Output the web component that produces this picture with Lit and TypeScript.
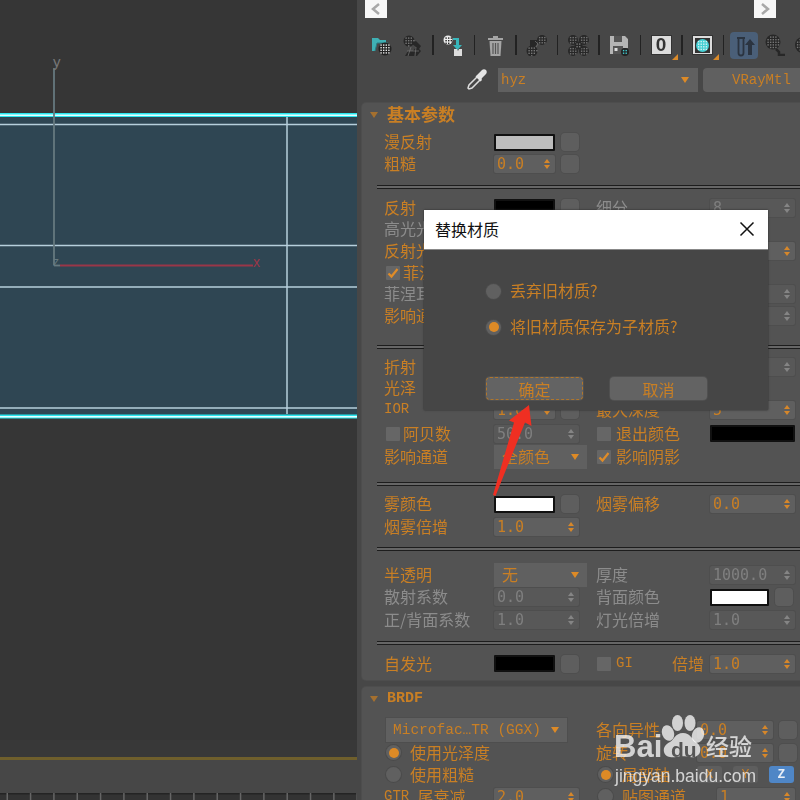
import { LitElement, html, css, svg } from "lit";
import { customElement } from "lit/decorators.js";

// checker ball used by most of the material editor toolbar icons
const ball = (cx: number, cy: number, r: number, bg: string, dot: string) => {
  const dots = [];
  for (let y = -r; y <= r; y += 2.6) {
    for (let x = -r; x <= r; x += 2.6) {
      if (x * x + y * y < r * r * 0.8) {
        dots.push(svg`<rect x=${cx + x - 0.7} y=${cy + y - 0.7} width="1.4" height="1.4" fill=${dot}></rect>`);
      }
    }
  }
  return svg`<circle cx=${cx} cy=${cy} r=${r} fill=${bg}></circle>${dots}`;
};

const D = "#272727";
const G = "#777";

const icons = {
  open: svg`<path d="M1 3h6l2 2h6v3H6l-2 8H1z" fill="#3fb0b4"></path><path d="M4 16l2-8h11" fill="none" stroke="#2a7d82" stroke-width="1"></path>${ball(14, 14, 6.5, "#222", "#e8e8e8")}`,
  scene: svg`${ball(7, 6, 5.5, D, G)}<path d="M9 8l5-2 5 5-2 3 2 2-4 5H3l3-5h5l3-4z" fill=${D}></path><path d="M5 16h12M9 12l-3 9M14 12l-1 9" stroke=${G} stroke-width="0.7" fill="none"></path>`,
  assign: svg`${ball(5, 5, 4.5, "#eee", "#222")}<path d="M10 3h6v7h3l-4.500 5-4.500-5h3V5h-3z" fill="#38b6bb"></path><path d="M11 14h3l1 2 1-2h3v7h-8z" fill="#ddd"></path>`,
  trash: svg`<path d="M8 1h5v2h5v2H3V3h5z" fill="#a5a5a5"></path><path d="M4.500 6h12l-1 15h-10z" fill="#a5a5a5"></path><path d="M8 8v11M10.500 8v11M13 8v11" stroke="#555" stroke-width="1.200"></path>`,
  link3: svg`${ball(16, 5, 5, D, G)}${ball(6, 16, 5.5, D, G)}<path d="M4 5h7v4l-2 3H4z" fill=${D}></path><path d="M9 6l3 3-2 3" stroke=${G} stroke-width="0.7" fill="none"></path>`,
  link6: svg`${ball(5, 5, 5, D, G)}${ball(16, 5, 5, D, G)}${ball(5, 16, 5, D, G)}${ball(16, 16, 5, D, G)}${ball(10.500, 10.500, 4, D, G)}`,
  save: svg`<path d="M1 1h15l3 3v9h-8v6H1z" fill="#b5b5b5"></path><rect x="5" y="1" width="8" height="6" fill="#555"></rect><rect x="4" y="11" width="10" height="8" fill="#555"></rect><rect x="5.500" y="13" width="3" height="3" fill="#ddd"></rect>${ball(16, 17, 4, "#222", "#42d0d5")}`,
  tube: svg`<rect width="28" height="27" rx="4" fill="#4a5f78"></rect><path d="M7 6h8M8.500 6v15a2.500 2.500 0 0 0 5 0V6" fill="none" stroke="#2b3440" stroke-width="1.800"></path><path d="M20 7l-5 6h3v10h4V13h3z" fill="#2b3440"></path>`,
  ballStem: svg`${ball(9, 8, 7.5, D, G)}<path d="M12 15l3 3v3h6" fill="none" stroke=${D} stroke-width="2.500"></path>`,
  ballOnly: svg`${ball(10, 10, 8, D, G)}`,
};

@customElement("app-root")
export class AppRoot extends LitElement {
  static styles = css`
    :host {
      display: block;
      width: 800px;
      height: 800px;
      position: relative;
      overflow: hidden;
      font-family: "Noto Sans CJK SC", "Liberation Sans", sans-serif;
      font-size: 16px;
      color: #c97f24;
      background: #474747;
    }
    .app {
      display: flex;
      height: 800px;
      overflow: hidden;
      filter: blur(0.35px);
    }
    .viewport {
      width: 357px;
      flex-shrink: 0;
      height: 800px;
      display: block;
    }
    .panel {
      flex: 1;
      min-width: 0;
    }
    .nav {
      display: flex;
      justify-content: space-between;
      padding: 0 24px 0 8px;
      height: 18px;
    }
    .nav-btn {
      width: 22px;
      height: 18px;
      background: #f7f7f7;
      color: #a8a8a8;
      display: flex;
      align-items: center;
      justify-content: center;
    }
    .toolbar {
      display: flex;
      align-items: center;
      gap: 9.5px;
      height: 28px;
      margin-top: 13px;
      padding-left: 14px;
      white-space: nowrap;
    }
    .toolbar svg {
      flex-shrink: 0;
      display: block;
    }
    .sep {
      width: 1.5px;
      height: 20px;
      background: #222;
      flex-shrink: 0;
    }
    .boxed {
      position: relative;
      width: 21px;
      height: 20px;
      flex-shrink: 0;
      display: flex;
      align-items: center;
      justify-content: center;
      background: #dcdcdc;
      box-shadow: inset 0 0 0 1px #333;
      color: #333;
      font: bold 19px "Liberation Sans", sans-serif;
    }
    .boxed::after {
      content: "";
      position: absolute;
      right: -6px;
      bottom: -5px;
      border-left: 6px solid transparent;
      border-bottom: 6px solid #d98a2b;
    }
    .boxed .core {
      width: 15px;
      height: 15px;
      background: #333;
      display: flex;
      align-items: center;
      justify-content: center;
    }
    .active {
      margin-left: -4px;
    }
    .next-icon {
      margin-left: -3px;
    }
    .material {
      display: flex;
      align-items: center;
      height: 24px;
      margin-top: 9px;
    }
    .dropper {
      margin-left: 109px;
      width: 22px;
      flex-shrink: 0;
    }
    .select {
      display: flex;
      align-items: center;
      justify-content: space-between;
      box-sizing: border-box;
      background: #606060;
      flex-shrink: 0;
    }
    .name {
      width: 200px;
      height: 24px;
      margin-left: 10px;
      padding: 0 9px 0 3px;
    }
    .mono {
      font-family: "Liberation Mono", "Noto Sans CJK SC", monospace;
      font-size: 14px;
    }
    .type {
      flex: 1;
      height: 24px;
      margin-left: 5px;
      background: #606060;
      border-radius: 4px 0 0 4px;
      padding-left: 29px;
      display: flex;
      align-items: center;
    }
    .tri {
      width: 0;
      height: 0;
      border-left: 4.5px solid transparent;
      border-right: 4.5px solid transparent;
      border-top: 6px solid #dd8a26;
      flex-shrink: 0;
    }
    .section {
      background: #535353;
      margin-left: 5px;
      border-radius: 4px 0 0 4px;
      box-shadow: 0 0 0 1px #4d4d4d;
    }
    .basic {
      margin-top: 11px;
      padding-bottom: 5px;
    }
    .brdf {
      margin-top: 7px;
    }
    .head {
      display: flex;
      align-items: center;
      box-sizing: border-box;
      height: 23px;
      padding-left: 8px;
      gap: 9px;
      font-size: 17px;
      font-weight: 700;
    }
    .head .tri {
      border-top-color: #a5702f;
    }
    .head span:last-child {
      padding-bottom: 2px;
    }
    .head .mono {
      font-size: 15px;
      padding-bottom: 0;
    }
    .brdf .head {
      height: 22px;
      padding-top: 3px;
    }
    .rows {
      padding-left: 22px;
    }
    .top {
      padding-top: 5px;
    }
    .top9 {
      padding-top: 9px;
    }
    .row {
      display: flex;
      align-items: center;
      height: 22px;
      white-space: nowrap;
    }
    .h216 {
      height: 21.6px;
    }
    .h21 {
      height: 21px;
    }
    .h23 {
      height: 23px;
    }
    .h24 {
      height: 24px;
    }
    .left {
      display: flex;
      align-items: center;
      width: 212px;
      flex-shrink: 0;
    }
    .lab {
      display: flex;
      align-items: center;
      width: 110px;
      flex-shrink: 0;
      padding-bottom: 2px;
    }
    .rlab {
      display: flex;
      align-items: center;
      width: 114px;
      flex-shrink: 0;
      padding-bottom: 2px;
    }
    .rnarrow {
      width: 101px;
    }
    .rwide {
      width: 121px;
    }
    .text {
      padding-bottom: 2px;
    }
    .dim {
      color: #8c8c8c;
    }
    .spin {
      box-sizing: border-box;
      height: 18px;
      background: #5f5f5f;
      box-shadow: 0 0 0 1px #4e4e4e;
      border-radius: 2px;
      display: flex;
      align-items: center;
      justify-content: space-between;
      padding: 0 5px 0 3px;
      flex-shrink: 0;
      font: 15px "DejaVu Sans Mono", monospace;
    }
    .spin.off {
      background: #585858;
      color: #7f7f7f;
    }
    .s61 {
      width: 61px;
    }
    .s76 {
      width: 76px;
    }
    .s78 {
      width: 78px;
    }
    .s85 {
      width: 85px;
    }
    .arrows {
      display: flex;
      flex-direction: column;
      gap: 2px;
    }
    .arrows i {
      display: block;
      width: 0;
      height: 0;
      border-left: 3.5px solid transparent;
      border-right: 3.5px solid transparent;
    }
    .arrows i:first-child {
      border-bottom: 4px solid #d6872a;
    }
    .arrows i:last-child {
      border-top: 4px solid #d6872a;
    }
    .off .arrows i:first-child {
      border-bottom-color: #858585;
    }
    .off .arrows i:last-child {
      border-top-color: #858585;
    }
    .swatch {
      box-sizing: border-box;
      width: 61px;
      height: 17px;
      border: 2px solid #111;
      border-radius: 1px;
      flex-shrink: 0;
    }
    .swatch.wide {
      width: 85px;
    }
    .swatch.light {
      width: 59px;
    }
    .black {
      background: #000;
    }
    .white {
      background: #fff;
    }
    .grey {
      background: #bdbdbd;
    }
    .mini {
      width: 18px;
      height: 18px;
      margin-left: 6px;
      background: #5e5e5e;
      border-radius: 4px;
      box-shadow: 0 0 0 1px #4e4e4e;
      flex-shrink: 0;
    }
    .rule {
      height: 4px;
      margin-left: 15px;
      box-sizing: border-box;
      border-top: 1px solid #1d1d1d;
      border-bottom: 1.5px solid #1d1d1d;
      background: #666;
    }
    .rule1 {
      margin-top: 10px;
      margin-bottom: 8px;
    }
    .rule2 {
      margin-top: 18px;
      margin-bottom: 7.4px;
    }
    .rule3 {
      margin-top: 14px;
      margin-bottom: 7px;
    }
    .rule4 {
      margin-top: 9px;
      margin-bottom: 13px;
    }
    .rule5 {
      margin-top: 10px;
      margin-bottom: 8px;
    }
    .check {
      box-sizing: border-box;
      width: 14px;
      height: 14px;
      margin: 2px 3px 0 2px;
      background: #666;
      border-radius: 1px;
      flex-shrink: 0;
      display: flex;
    }
    .rlab .check {
      margin: 2px 5px 0 1px;
    }
    .drop {
      width: 93px;
      height: 24px;
      padding: 0 8px 0 8px;
    }
    .micro {
      width: 181px;
      height: 24px;
      margin-left: 2px;
      padding: 0 8px 0 7px;
      box-shadow: 0 0 0 1px #4e4e4e;
      font-size: 14.500px;
    }
    .micro-cell {
      width: 212px;
      flex-shrink: 0;
      display: flex;
    }
    .radio {
      width: 15px;
      height: 15px;
      margin: 0 9px 0 2px;
      border-radius: 50%;
      background: #606060;
      box-shadow: 0 0 0 1px #4b4b4b;
      flex-shrink: 0;
      display: flex;
      align-items: center;
      justify-content: center;
    }
    .rlab .radio {
      margin-top: 2px;
    }
    .radio.on::after {
      content: "";
      width: 10px;
      height: 10px;
      border-radius: 50%;
      background: #dd8a26;
    }
    .push {
      margin-left: auto;
      padding-right: 6px;
    }
    .axis {
      box-sizing: border-box;
      width: 25px;
      height: 17px;
      margin-right: 11px;
      background: #5e5e5e;
      border-radius: 3px;
      display: flex;
      align-items: center;
      justify-content: center;
      font: 13px "Liberation Mono", monospace;
      flex-shrink: 0;
    }
    .axis.on {
      background: #4f86c6;
      color: #e8eef6;
      font-weight: 700;
      margin-right: 0;
    }
    .dialog {
      position: absolute;
      left: 424px;
      top: 210px;
      width: 344px;
      height: 200px;
      background: #464646;
      box-shadow: 0 0 2px #2a2a2a;
      filter: blur(0.3px);
    }
    .title {
      height: 40px;
      background: #fff;
      color: #111;
      display: flex;
      align-items: center;
      justify-content: space-between;
      padding: 0 13px 1px 11px;
      border-bottom: 1px solid #888;
      box-sizing: border-box;
    }
    .choices {
      padding: 23px 0 0 60px;
    }
    .choice {
      display: flex;
      align-items: center;
      height: 36px;
    }
    .actions {
      display: flex;
      gap: 27px;
      margin: 32px 0 0 62px;
    }
    .action {
      box-sizing: border-box;
      width: 97px;
      height: 23px;
      background: #636363;
      border-radius: 4px;
      display: flex;
      align-items: center;
      justify-content: center;
      box-shadow: 0 0 0 1px #505050;
    }
    .focus {
      border: 1.500px dashed #b0762c;
    }
    .overlay {
      position: absolute;
      left: 0;
      top: 0;
      pointer-events: none;
    }
    .mark {
      position: absolute;
      color: rgba(255, 255, 255, 0.74);
      white-space: nowrap;
      line-height: 1;
      font-family: "Liberation Sans", sans-serif;
    }
    .mark-bai {
      left: 614px;
      top: 731px;
      font-size: 31px;
      font-weight: 700;
    }
    .mark-du {
      left: 671px;
      top: 739px;
      font-size: 21px;
      font-weight: 700;
      color: #555;
    }
    .mark-jy {
      left: 706px;
      top: 734px;
      font-size: 23px;
      font-family: "Noto Sans CJK SC", sans-serif;
      font-weight: 500;
    }
    .mark-url {
      left: 615px;
      top: 768px;
      font-size: 17.500px;
    }
  `;

  spin(value: string, size: string, off = false) {
    return html`<div class="spin ${size} ${off ? "off" : ""}">
      <span>${value}</span>
      <span class="arrows"><i></i><i></i></span>
    </div>`;
  }

  swatch(color: string, mini = true) {
    return html`<div class="swatch ${color}"></div>
      ${mini ? html`<div class="mini"></div>` : ""}`;
  }

  check(on = false) {
    return html`<span class="check">
      ${on
        ? html`<svg width="14" height="14" viewBox="0 0 14 14"><path d="M2.500 7.500l3 3 6-7.500" fill="none" stroke="#e08c28" stroke-width="2.200"></path></svg>`
        : ""}
    </span>`;
  }

  toolbar() {
    const ico = (body: unknown, w = 21, h = 21) =>
      html`<svg width=${w} height=${h} viewBox="0 0 ${w} ${h}">${body}</svg>`;
    const sep = html`<span class="sep"></span>`;
    return html`<div class="toolbar">
      ${ico(icons.open)} ${ico(icons.scene)} ${sep} ${ico(icons.assign)} ${sep} ${ico(icons.trash)} ${sep}
      ${ico(icons.link3)} ${sep} ${ico(icons.link6)} ${sep} ${ico(icons.save)} ${sep}
      <span class="boxed">0</span> ${sep}
      <span class="boxed"><span class="core">${ico(ball(7.500, 7.500, 6.500, "#44cfd4", "#d8f4f5"), 15, 15)}</span></span>
      ${sep}
      <span class="active">${ico(icons.tube, 28, 27)}</span>
      <span class="next-icon">${ico(icons.ballStem, 22, 22)}</span>
      <span class="next-icon">${ico(icons.ballOnly, 20, 20)}</span>
    </div>`;
  }

  viewport() {
    const ticks = [];
    for (let x = 6.500; x < 357; x += 23.330) {
      ticks.push(svg`<rect x=${x} y="793" width="1.500" height="7" fill="#666"></rect>`);
    }
    return html`<svg class="viewport" viewBox="0 0 357 800">
      <rect width="357" height="800" fill="#363636"></rect>
      <rect y="115" width="357" height="301" fill="#2f4653"></rect>
      <g stroke="#b7cfdc" stroke-width="1.500" fill="none">
        <path d="M0 124.500H357M0 245.500H357M0 287H357M0 408H357M287 117V414"></path>
      </g>
      <rect y="113" width="357" height="4" fill="#29e6ee"></rect>
      <rect y="114.500" width="357" height="1.500" fill="#e6ffff"></rect>
      <rect y="414.500" width="357" height="4" fill="#29e6ee"></rect>
      <rect y="416" width="357" height="1.500" fill="#e6ffff"></rect>
      <path d="M54 68V265" stroke="#66797f" stroke-width="1.800"></path>
      <path d="M54 265.500H60" stroke="#66797f" stroke-width="1.800"></path>
      <path d="M60 265.500H253" stroke="#9a3648" stroke-width="1.800"></path>
      <text x="53" y="67" font-size="15" font-family="Liberation Sans" fill="#777">y</text>
      <text x="53" y="266" font-size="12" font-family="Liberation Sans" fill="#66797f">z</text>
      <text x="253" y="267" font-size="14" font-family="Liberation Sans" fill="#9a3648">x</text>
      <rect y="740" width="357" height="17" fill="#383838"></rect>
      <rect y="757" width="357" height="3" fill="#6f5f2c"></rect>
      <rect y="760" width="357" height="40" fill="#474747"></rect>
      <rect y="793" width="357" height="7" fill="#333"></rect>
      <rect y="793" width="357" height="1.500" fill="#242424"></rect>
      ${ticks}
    </svg>`;
  }

  basicRows() {
    return html`<div class="rows top">
        <div class="row"><div class="left"><span class="lab">漫反射</span>${this.swatch("grey")}</div></div>
        <div class="row"><div class="left"><span class="lab">粗糙</span>${this.spin("0.0", "s61")}<div class="mini"></div></div></div>
      </div>
      <div class="rule rule1"></div>
      <div class="rows">
        <div class="row h216">
          <div class="left"><span class="lab">反射</span>${this.swatch("black")}</div>
          <span class="rlab dim">细分</span>${this.spin("8", "s85", true)}
        </div>
        <div class="row h216"><div class="left"><span class="lab dim">高光光泽</span>${this.spin("1.0", "s85", true)}</div></div>
        <div class="row h216">
          <div class="left"><span class="lab">反射光泽</span>${this.spin("1.0", "s85")}</div>
          <span class="rlab dim">暗淡距离</span>${this.spin("100.0", "s85")}
        </div>
        <div class="row h216"><div class="left"><span class="lab">${this.check(true)}菲涅耳反射</span></div></div>
        <div class="row h216">
          <div class="left"><span class="lab dim">菲涅耳折射率</span>${this.spin("1.6", "s85", true)}</div>
          <span class="rlab dim">暗淡衰减</span>${this.spin("0.0", "s85", true)}
        </div>
        <div class="row h216">
          <div class="left"><span class="lab">影响通道</span>${this.spin("0", "s85")}</div>
          <span class="rlab dim">最大深度</span>${this.spin("0", "s85", true)}
        </div>
      </div>
      <div class="rule rule2"></div>
      <div class="rows">
        <div class="row">
          <div class="left"><span class="lab">折射</span>${this.swatch("black")}</div>
          <span class="rlab dim">细分</span>${this.spin("8", "s85", true)}
        </div>
        <div class="row h21"><div class="left"><span class="lab">光泽</span>${this.spin("1.0", "s61")}<div class="mini"></div></div></div>
        <div class="row h23">
          <div class="left"><span class="lab mono">IOR</span>${this.spin("1.6", "s61")}<div class="mini"></div></div>
          <span class="rlab">最大深度</span>${this.spin("5", "s85")}
        </div>
        <div class="row h24">
          <div class="left"><span class="lab">${this.check()}阿贝数</span>${this.spin("50.0", "s85", true)}</div>
          <span class="rlab">${this.check()}退出颜色</span><div class="swatch black wide"></div>
        </div>
        <div class="row">
          <div class="left"><span class="lab">影响通道</span><div class="select drop"><span class="text">全颜色</span><span class="tri"></span></div></div>
          <span class="rlab">${this.check(true)}影响阴影</span>
        </div>
      </div>
      <div class="rule rule3"></div>
      <div class="rows">
        <div class="row h23">
          <div class="left"><span class="lab">雾颜色</span>${this.swatch("white")}</div>
          <span class="rlab">烟雾偏移</span>${this.spin("0.0", "s85")}
        </div>
        <div class="row"><div class="left"><span class="lab">烟雾倍增</span>${this.spin("1.0", "s85")}</div></div>
      </div>
      <div class="rule rule4"></div>
      <div class="rows">
        <div class="row">
          <div class="left"><span class="lab">半透明</span><div class="select drop"><span class="text">无</span><span class="tri"></span></div></div>
          <span class="rlab dim">厚度</span>${this.spin("1000.0", "s85", true)}
        </div>
        <div class="row h23">
          <div class="left"><span class="lab dim">散射系数</span>${this.spin("0.0", "s85", true)}</div>
          <span class="rlab dim">背面颜色</span><div class="swatch white light"></div><div class="mini"></div>
        </div>
        <div class="row">
          <div class="left"><span class="lab dim">正/背面系数</span>${this.spin("1.0", "s85", true)}</div>
          <span class="rlab dim">灯光倍增</span>${this.spin("1.0", "s85", true)}
        </div>
      </div>
      <div class="rule rule5"></div>
      <div class="rows">
        <div class="row">
          <div class="left"><span class="lab">自发光</span>${this.swatch("black")}</div>
          <span class="rlab">${this.check()}<span class="mono">GI</span><span class="push">倍增</span></span>${this.spin("1.0", "s85")}
        </div>
      </div>`;
  }

  brdfRows() {
    return html`<div class="rows top9">
      <div class="row h24">
        <div class="micro-cell"><div class="select micro mono"><span>Microfac…TR (GGX)</span><span class="tri"></span></div></div>
        <span class="rlab rnarrow">各向异性</span>${this.spin("0.0", "s76")}<div class="mini"></div>
      </div>
      <div class="row">
        <div class="left"><span class="radio on"></span><span class="text">使用光泽度</span></div>
        <span class="rlab rnarrow">旋转</span>${this.spin("0.0", "s76")}<div class="mini"></div>
      </div>
      <div class="row">
        <div class="left"><span class="radio"></span><span class="text">使用粗糙</span></div>
        <span class="rlab rnarrow"><span class="radio on"></span>局部轴</span>
        <span class="axis">X</span><span class="axis">Y</span><span class="axis on">Z</span>
      </div>
      <div class="row">
        <div class="left"><span class="lab"><span class="mono">GTR&nbsp;</span>尾衰减</span>${this.spin("2.0", "s85")}</div>
        <span class="rlab rwide"><span class="radio"></span>贴图通道</span>${this.spin("1", "s78")}
      </div>
    </div>`;
  }

  render() {
    return html`
      <div class="app">
        ${this.viewport()}
        <div class="panel">
          <div class="nav">
            <div class="nav-btn">
              <svg width="10" height="12" viewBox="0 0 10 12"><path d="M8 1L2 6l6 5" fill="none" stroke="currentColor" stroke-width="2.500"></path></svg>
            </div>
            <div class="nav-btn">
              <svg width="10" height="12" viewBox="0 0 10 12"><path d="M2 1l6 5-6 5" fill="none" stroke="currentColor" stroke-width="2.500"></path></svg>
            </div>
          </div>
          ${this.toolbar()}
          <div class="material">
            <svg class="dropper" width="22" height="22" viewBox="0 0 22 22">
              <path d="M3 20l-1-1 1-3 9-9 3 3-9 9z" fill="none" stroke="#ddd" stroke-width="1.500"></path>
              <path d="M11 6l5-5c1-1 3-1 4 0s1 3 0 4l-5 5 1 1-1.500 1.500-5-5L11 6z" fill="#e4e4e4"></path>
            </svg>
            <div class="select name mono"><span>hyz</span><span class="tri"></span></div>
            <div class="type mono">VRayMtl</div>
          </div>
          <div class="section basic">
            <div class="head"><span class="tri"></span><span>基本参数</span></div>
            ${this.basicRows()}
          </div>
          <div class="section brdf">
            <div class="head"><span class="tri"></span><span class="mono">BRDF</span></div>
            ${this.brdfRows()}
          </div>
        </div>
      </div>

      <div class="dialog">
        <div class="title">
          <span>替换材质</span>
          <svg width="16" height="16" viewBox="0 0 16 16"><path d="M1.500 1.500l13 13M14.500 1.500l-13 13" stroke="#111" stroke-width="1.500"></path></svg>
        </div>
        <div class="choices">
          <div class="choice"><span class="radio"></span><span class="text">丢弃旧材质?</span></div>
          <div class="choice"><span class="radio on"></span><span class="text">将旧材质保存为子材质?</span></div>
        </div>
        <div class="actions">
          <div class="action focus">确定</div>
          <div class="action">取消</div>
        </div>
      </div>

      <svg class="overlay" width="800" height="800" viewBox="0 0 800 800">
        <path d="M529 405l2.500 21-6.500-3.500L495.500 496l-2.500-1 21-72.500-5 -2z" fill="#ef2f22"></path>
        <g fill="rgba(255,255,255,0.74)">
          <ellipse cx="668" cy="733" rx="6" ry="8" transform="rotate(-20 668 733)"></ellipse>
          <ellipse cx="677.500" cy="723" rx="5.500" ry="8"></ellipse>
          <ellipse cx="690" cy="723" rx="5.500" ry="8"></ellipse>
          <ellipse cx="698" cy="735" rx="6" ry="8" transform="rotate(20 698 735)"></ellipse>
          <path d="M683 733c7 0 9 6 13 9s5 6 4 10-6 6-10 5-10-1-14 0-11 0-12-5 2-8 6-10 5-9 13-9z"></path>
        </g>
      </svg>
      <span class="mark mark-bai">Bai</span>
      <span class="mark mark-du">du</span>
      <span class="mark mark-jy">经验</span>
      <span class="mark mark-url">jingyan.baidu.com</span>
    `;
  }
}
